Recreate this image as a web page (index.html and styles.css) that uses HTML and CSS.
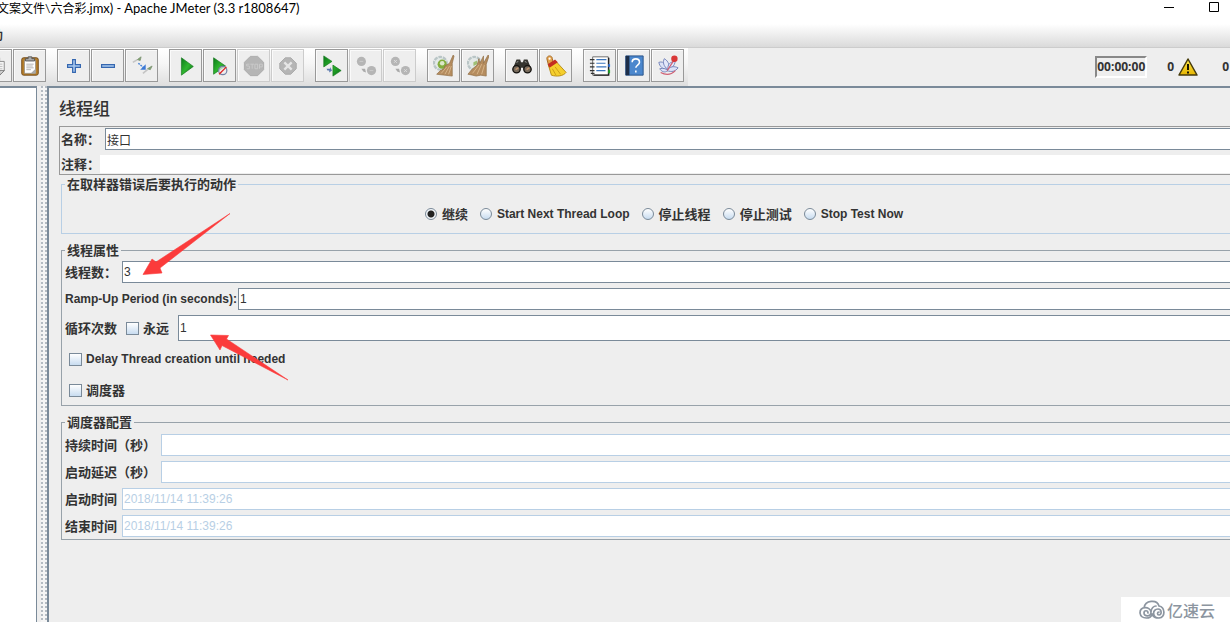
FILE: index.html
```html
<!DOCTYPE html>
<html lang="zh-CN">
<head>
<meta charset="utf-8">
<title>Apache JMeter (3.3 r1808647)</title>
<link rel="stylesheet" href="styles.css">
</head>
<body>
<header class="titlebar">
  <span class="title">文案文件\六合彩<span class="app-name">.jmx) - Apache JMeter (3.3 r1808647)</span></span>
  <div class="window-controls">
    <button aria-label="最小化"><svg width="12" height="12"><path d="M1 6.5h10" stroke="#000"/></svg></button>
    <button aria-label="最大化"><svg width="12" height="12"><path d="M1.5 1.5h9v9h-9z" fill="none" stroke="#000"/></svg></button>
  </div>
</header>
<nav class="menubar"><button class="menu">助</button></nav>
<div class="toolbar">
  <svg width="0" height="0" class="defs">
    <defs>
      <linearGradient id="green" x1="0" y1="0" x2="1" y2="1"><stop offset="0" stop-color="#0a7a18"/><stop offset=".5" stop-color="#2fb52f"/><stop offset="1" stop-color="#067014"/></linearGradient>
      <linearGradient id="gold" x1="0" y1="0" x2="0" y2="1"><stop offset="0" stop-color="#ffe94a"/><stop offset="1" stop-color="#e6b400"/></linearGradient>
    </defs>
  </svg>
  <div class="tools">
    <div class="tool-group">
      <button class="tool" aria-label="复制"><svg viewBox="0 0 24 24"><path d="M3 3h13v14H3z" fill="#fafafa" stroke="#999"/><path d="M8 7h13v10l-5 5H8z" fill="#f4f4f4" stroke="#888"/><path d="M10 10h9M10 12.500h9M10 15h9" stroke="#bbb"/><path d="M21 17h-5v5z" fill="#ddd" stroke="#777"/></svg></button>
      <button class="tool" aria-label="粘贴"><svg viewBox="0 0 24 24"><rect x="3" y="3" width="18" height="19" rx="2" fill="#b7812e" stroke="#6c4412"/><path d="M6 6h12v14H6z" fill="#fff" stroke="#888" stroke-width=".7"/><path d="M18 15v5h-5z" fill="#aaa"/><path d="M7 6.500V4h3V2h4v2h3v2.500z" fill="#aaa" stroke="#555"/><path d="M8 10h8M8 12h7M8 14h8M8 16h5" stroke="#999" stroke-width=".8"/></svg></button>
    </div>
    <div class="tool-group">
      <button class="tool" aria-label="展开"><svg viewBox="0 0 24 24"><path d="M10.500 5h3v5.500H19v3h-5.500V19h-3v-5.500H5v-3h5.500z" fill="#a9c8ee" stroke="#3567b0" stroke-width="1.300"/></svg></button>
      <button class="tool" aria-label="折叠"><svg viewBox="0 0 24 24"><path d="M5 10.500h14v3H5z" fill="#a9c8ee" stroke="#3567b0" stroke-width="1.300"/></svg></button>
      <button class="tool" aria-label="切换"><svg viewBox="0 0 24 24"><path d="M2 8l5-3M13 20l5-4" stroke="#c4c4c4" stroke-width="1.800"/><path d="M7 5l4-3-1 4zM18 15l5-3-2 4z" fill="#7ba568" stroke="#839779"/><path d="M8 9l6 5" stroke="#4c87db" stroke-width="1.600" stroke-dasharray="2 1"/><path d="M16 10v6h-6z" fill="#3b78d5"/></svg></button>
    </div>
    <div class="tool-group">
      <button class="tool" aria-label="启动"><svg viewBox="0 0 24 24"><path d="M7 3v19l13-9.500z" fill="url(#green)" stroke="#12761a" stroke-width=".7"/></svg></button>
      <button class="tool" aria-label="不停顿开始"><svg viewBox="0 0 24 24"><path d="M5 3v18l13-9z" fill="url(#green)" stroke="#12761a" stroke-width=".7"/><circle cx="15" cy="17" r="4.500" fill="#eee" fill-opacity=".7" stroke="#7580a5" stroke-width="1.300"/><path d="M11 21l8-8" stroke="#d22" stroke-width="1.400"/></svg></button>
      <button class="tool off" disabled aria-label="停止"><svg viewBox="0 0 24 24"><path d="M8 1.500h8l6.500 6.500v8L16 22.500H8L1.500 16V8z" fill="#b5b5b5" stroke="#aaa"/><path d="M7 10H4v2h3v3H4M8 10h4M10 10v5M13 10h3v5h-3zM18 15v-5h3v3h-3" fill="none" stroke="#ccc"/></svg></button>
      <button class="tool off" disabled aria-label="关闭"><svg viewBox="0 0 24 24"><path d="M9 3h6l6 6v6l-6 6H9l-6-6V9z" fill="#b5b5b5" stroke="#aaa"/><path d="M8 8l8 8M16 8l-8 8" stroke="#e6e6e6" stroke-width="2.500"/></svg></button>
    </div>
    <div class="tool-group">
      <button class="tool" aria-label="远程启动所有"><svg viewBox="0 0 24 24"><path d="M3 1v12l9-6zM13 11v12l9-6z" fill="url(#green)" stroke="#12761a" stroke-width=".7"/><path d="M6 15h4v-2l2 4-3 2v-2H7z" fill="#5a78ad"/></svg></button>
      <button class="tool off" disabled aria-label="远程停止所有"><svg viewBox="0 0 24 24"><circle cx="7" cy="7" r="5" fill="#b5b5b5"/><circle cx="18" cy="17" r="5" fill="#b5b5b5"/><path d="M5 7h4M16 17h4" stroke="#ccc"/><path d="M7 15h4l1 4-3-1z" fill="#aaa"/></svg></button>
      <button class="tool off" disabled aria-label="远程关闭所有"><svg viewBox="0 0 24 24"><circle cx="7" cy="7" r="5" fill="#b5b5b5"/><circle cx="18" cy="17" r="5" fill="#b5b5b5"/><path d="M5.500 5.500l3 3m0-3l-3 3M16.500 15.500l3 3m0-3l-3 3" stroke="#ddd"/><path d="M7 15h4l1 4-3-1z" fill="#aaa"/></svg></button>
    </div>
    <div class="tool-group">
      <button class="tool" aria-label="清除"><svg viewBox="0 0 24 24"><circle cx="8" cy="9" r="7" fill="#e3e9e8" stroke="#b9c5c6" stroke-width="2.500" stroke-dasharray="4 1"/><circle cx="10" cy="10" r="5" fill="#83ad3d"/><circle cx="10" cy="9" r="2.500" fill="#dce8ca"/><path d="M22 0l1 1-2 8v14l-17-2 4-4 4-2 1-3 5-3z" fill="#b58c5e" stroke="#8d6a42" stroke-width=".7"/><path d="M9 20l6-7M13 21l5-9M17 21l3-9" stroke="#e2c398" stroke-width=".8"/></svg></button>
      <button class="tool" aria-label="清除全部"><svg viewBox="0 0 24 24"><circle cx="8" cy="9" r="7" fill="#e3e9e8" stroke="#b9c5c6" stroke-width="2.500" stroke-dasharray="4 1"/><path d="M7 8l4-2v4l-4 2z" fill="#9fbf75"/><path d="M1 21l4-5 6-5 2-7 1 5 4-8v8l5-9 1 1-3 9v13l-6-1-5 1-4-1z" fill="#b58c5e" stroke="#8d6a42" stroke-width=".7"/><path d="M6 20l7-9M11 21l5-11M16 21l3-10" stroke="#e2c398" stroke-width=".8"/></svg></button>
    </div>
    <div class="tool-group">
      <button class="tool" aria-label="查找"><svg viewBox="0 0 24 24"><path d="M6 5h4l1 3h2l1-3h4l4 10-2 4h-5l-2-5h-2l-2 5H4l-2-4z" fill="#35342f"/><circle cx="6" cy="15.500" r="4" fill="#786b5c" stroke="#171512" stroke-width="1.500"/><circle cx="18" cy="15.500" r="4" fill="#786b5c" stroke="#171512" stroke-width="1.500"/><path d="M6 8l2-1M15 7l2 1" stroke="#aaa"/><path d="M5 16l3-2M17 16l3-2" stroke="#c29570" stroke-width="1.500"/></svg></button>
      <button class="tool" aria-label="重置查找"><svg viewBox="0 0 24 24"><path d="M2 4c0-4 6-4 6 0l1 5-5 3z" fill="#e4a24c" stroke="#a2651e"/><circle cx="5" cy="4" r="1.200" fill="#fff"/><path d="M4 12l8-5 11 12c-3 4-10 5-16 3z" fill="#f5cf2d" stroke="#b58a13"/><path d="M3 10l8-5 3 3-9 6z" fill="#c42f20"/><path d="M8 15l4 7M11 13l6 8" stroke="#c99a15"/></svg></button>
    </div>
    <div class="tool-group">
      <button class="tool" aria-label="函数助手"><svg viewBox="0 0 24 24"><path d="M4 2h17v20H4z" fill="#fff" stroke="#666"/><path d="M21.500 3v19H5" fill="none" stroke="#222" stroke-width="1.500"/><path d="M8 5h11M8 9h10M8 13h11M8 17h10" stroke="#3a75bd" stroke-width="1.300"/><path d="M1 5h5M1 9h5M1 13h5M1 17h5M2 20h4" stroke="#333" stroke-width="1.300"/><path d="M21 10h2v3h-2z" fill="#3074df"/><path d="M21 16h2v4h-2z" fill="#25a82a"/></svg></button>
      <button class="tool" aria-label="帮助"><svg viewBox="0 0 24 24"><path d="M3 1h19v21H3z" fill="#4b87cd" stroke="#275287"/><path d="M3 1h4v21H3z" fill="#1d2e49"/><path d="M10 8c0-5 8-5 8 0 0 3-4 3-4 6M14 17v2" fill="none" stroke="#fff" stroke-width="1.700"/></svg></button>
      <button class="tool" aria-label="测试"><svg viewBox="0 0 24 24"><path d="M2 8c6-2 9 4 9 8C6 15 3 13 2 8z" fill="#dce2f7" stroke="#7180b8"/><path d="M8 4c5 3 6 8 4 12C7 12 6 8 8 4z" fill="#e4e8fa" stroke="#7180b8"/><path d="M12 16c-1-6 3-9 8-9-1 5-4 8-8 9z" fill="#e4e8fa" stroke="#7180b8"/><path d="M11 17c3-5 8-5 12-3-3 4-7 5-12 3z" fill="#dce2f7" stroke="#7180b8"/><path d="M3 15c4-1 7 0 9 2-4 3-7 1-9-2z" fill="#dce2f7" stroke="#7180b8"/><path d="M11 17l8-12M4 19q9 5 16-2" fill="none" stroke="#d05f73" stroke-width="1.300"/><circle cx="19" cy="4" r="3.500" fill="#d93838"/></svg></button>
    </div>
  </div>
  <div class="status">
    <output class="timer">00:00:00</output>
    <span class="count">0</span>
    <svg class="warning" viewBox="0 0 20 18" role="img" aria-label="警告"><path d="M10 1l9 16H1z" fill="url(#gold)" stroke="#463a0b" stroke-width="1.500" stroke-linejoin="round"/><path d="M10 6v6M10 13.500v2" stroke="#181400" stroke-width="2"/></svg>
    <span class="count threads">0</span>
  </div>
</div>
<div class="workspace">
  <aside class="tree"></aside>
  <div class="divider"></div>
  <main class="panel">
    <form class="form">
      <h1 class="heading">线程组</h1>
      <div class="identity">
        <div class="row name-row"><label for="name">名称：</label><input class="field" id="name" value="接口"></div>
        <div class="row comment-row"><label for="comment">注释：</label><input class="field plain" id="comment"></div>
      </div>
      <fieldset class="group soft">
        <legend>在取样器错误后要执行的动作</legend>
        <div class="choices">
          <label><input type="radio" name="action" checked>继续</label>
          <label class="latin"><input type="radio" name="action">Start Next Thread Loop</label>
          <label><input type="radio" name="action">停止线程</label>
          <label><input type="radio" name="action">停止测试</label>
          <label class="latin"><input type="radio" name="action">Stop Test Now</label>
        </div>
      </fieldset>
      <fieldset class="group threads-group">
        <legend>线程属性</legend>
        <div class="row"><label class="short" for="threads">线程数：</label><input class="field" id="threads" value="3"></div>
        <div class="row"><label class="latin ramp" for="ramp">Ramp-Up Period (in seconds):</label><input class="field" id="ramp" value="1"></div>
        <div class="row loop-row"><label class="loops" for="loops">循环次数</label><label class="check forever"><input type="checkbox">永远</label><input class="field" id="loops" value="1"></div>
        <div class="row check-row"><label class="check latin"><input type="checkbox">Delay Thread creation until needed</label></div>
        <div class="row check-row"><label class="check"><input type="checkbox">调度器</label></div>
      </fieldset>
      <fieldset class="group schedule">
        <legend>调度器配置</legend>
        <div class="row"><label class="long" for="duration">持续时间（秒）</label><input class="field" id="duration" disabled></div>
        <div class="row"><label class="long" for="delay">启动延迟（秒）</label><input class="field" id="delay" disabled></div>
        <div class="row"><label class="short" for="start">启动时间</label><input class="field" id="start" value="2018/11/14 11:39:26" disabled></div>
        <div class="row"><label class="short" for="end">结束时间</label><input class="field" id="end" value="2018/11/14 11:39:26" disabled></div>
      </fieldset>
    </form>
  </main>
</div>
<svg class="arrows" width="300" height="400" aria-hidden="true"><path d="M143 274.500L152 259l4 3L230 213.500 160 268l2 5zM210.500 335l18 .5-2 3.500L288 380l-66-34.500-2 4.500z" fill="#fb3b3b" stroke="#fb3b3b" stroke-width=".6"/></svg>
<div class="watermark">
  <svg width="26" height="20" viewBox="0 0 26 20" aria-hidden="true"><path d="M5 8C6 0 18-1 20 6c6 1 7 11 0 12-7 0-7-9-1-9 4 0 4 6 1 6-2 0-2-3 0-3M13 14c0 5-11 6-12-1 0-7 10-7 11-1 0 5-7 5-7 1 0-3 4-3 4 0M12 12c0-4 3-6 5-6M13 14c2 4 4 4 7 4" fill="none" stroke="#8c95a0" stroke-width="1.700" stroke-linecap="round"/></svg>
  <span>亿速云</span>
</div>
</body>
</html>
```
FILE: styles.css
```css
* { box-sizing: border-box; }
body {
  margin: 0;
  height: 100vh;
  display: flex;
  flex-direction: column;
  position: relative;
  overflow: hidden;
  background: #eee;
  color: #333;
  font: bold 13px/19px "Liberation Sans", "Noto Sans CJK SC", sans-serif;
}
button { padding: 0; border: 0; background: none; color: inherit; }
.titlebar {
  flex: none;
  height: 24px;
  display: flex;
  justify-content: space-between;
  background: #fff;
  color: #000;
}
.title {
  margin-left: -3px;
  font: 12px/16px Lato, "Noto Sans CJK SC", sans-serif;
  white-space: nowrap;
}
.app-name { font-size: 13px; }
.window-controls { display: flex; gap: 33px; padding: 1px 10px 0 0; }
.window-controls button { width: 12px; height: 12px; }
.window-controls svg { display: block; }
.menubar {
  flex: none;
  height: 24px;
  background: linear-gradient(#fff, #dadada);
  border-bottom: 1px solid #ccc;
}
.menu { display: block; margin-left: -9px; font: bold 12px/22px "Noto Sans CJK SC", sans-serif; }
.toolbar {
  flex: none;
  height: 38px;
  display: flex;
  justify-content: space-between;
  background: #eee;
  overflow: hidden;
}
.defs { position: absolute; }
.tools {
  display: flex;
  gap: 11px;
  margin-left: -21px;
  padding: 1px 4px 0 0;
  background: linear-gradient(#fff, #f6f6f6 40%, #dedede);
}
.tool-group { display: flex; gap: 1px; }
.tool {
  width: 33px;
  height: 33px;
  display: grid;
  place-items: center;
  background: #eee;
  border: 1px solid #999;
  box-shadow: inset 1px 1px #fafafa;
}
.tool svg { width: 22px; height: 22px; }
.off { border-color: #ccc; }
.status {
  display: flex;
  align-items: center;
  align-self: flex-start;
  height: 38px;
  font: bold 12px/18px "Open Sans", sans-serif;
}
.timer {
  height: 22px;
  border: solid #fff;
  border-width: 2px;
  border-top-color: #888;
  border-left-color: #888;
}
.count { margin-left: 20px; }
.warning { width: 20px; height: 18px; margin-left: 4px; }
.threads { margin: 0 1px 0 24px; }
.workspace { flex: 1; display: flex; min-height: 0; }
.tree { width: 37px; background: #fff; border: solid #7a8a99; border-width: 2px 1px 0 0; }
.divider {
  width: 10px;
  border-left: 4px solid #eee;
  background: radial-gradient(circle at 1px 1px, #b4bbc2 0 1px, transparent 1px) 0 0 / 4px 4px, #f5f5f5;
}
.panel {
  flex: 1;
  min-width: 0;
  overflow: hidden;
  border: solid #7a8a99;
  border-width: 2px 0 0 2px;
}
.form { margin-right: -40px; padding: 8px 3px 0 10px; }
.heading { margin: 0; font: 500 17px/24px "Noto Sans CJK SC", sans-serif; }
.identity { margin-top: 6px; border: 1px solid #999; }
.row { display: flex; align-items: center; min-width: 0; white-space: nowrap; }
.name-row { padding: 1px 0 0 1px; }
.name-row label { width: 44px; }
.comment-row { height: 24px; padding: 4px 0 0 1px; }
.comment-row label { width: 39px; }
.field {
  flex: 1;
  min-width: 0;
  height: 22px;
  padding: 0 1px;
  border: 1px solid #7a8a99;
  background: #fff;
  color: #333;
  font: 12px/18px "Liberation Sans", "Noto Sans CJK SC", sans-serif;
}
.field:disabled { border-color: #b8cfe5; color: #b8cfe5; }
.plain { height: 18px; border: 0; }
.group {
  margin: 0 0 7px 2px;
  padding: 1px 2px 0;
  min-width: 0;
  border: 1px solid #98a2aa;
}
.group legend { margin-left: 1px; padding: 0 2px; }
.soft { border-color: #b8cfe5; }
.latin { font-size: 12px; }
.choices { display: flex; justify-content: center; gap: 12px; height: 38px; align-items: center; }
.choices label, .check { display: flex; align-items: center; gap: 5px; white-space: nowrap; }
.group input[type="radio"], .group input[type="checkbox"] {
  appearance: none;
  flex: none;
  margin: 0;
  width: 12px;
  height: 12px;
  border: 1px solid #7a8a99;
  background: linear-gradient(#fff, #c8dcf0);
}
.group input[type="radio"] { border-radius: 50%; }
.group input[type="radio"]:checked { background: radial-gradient(circle, #222 0 3px, #f2f6fa 4px); }
.group input[type="checkbox"] { width: 13px; height: 13px; }
.threads-group .row, .schedule .row { padding-left: 1px; }
.threads-group .row { margin-bottom: 5px; }
.threads-group .row:last-child { margin-bottom: 2px; }
.short { width: 57px; }
.ramp { width: 173px; }
.loops { width: 61px; }
.forever { width: 52px; }
.group .forever { gap: 4px; }
.loop-row .field { height: 26px; }
.threads-group .check-row { height: 26px; padding-left: 5px; }
.check-row .check { gap: 4px; }
.schedule { padding-top: 2px; padding-bottom: 2px; }
.schedule .row + .row { margin-top: 5px; }
.long { width: 96px; }
.arrows { position: absolute; left: 0; top: 0; pointer-events: none; }
.watermark {
  position: absolute;
  right: 0;
  bottom: 0;
  width: 109px;
  height: 25px;
  display: flex;
  align-items: center;
  gap: 2px;
  padding-left: 18px;
  background: #fff;
  color: #8c95a0;
  font: 500 16px/24px "Noto Sans CJK SC", sans-serif;
}
```
